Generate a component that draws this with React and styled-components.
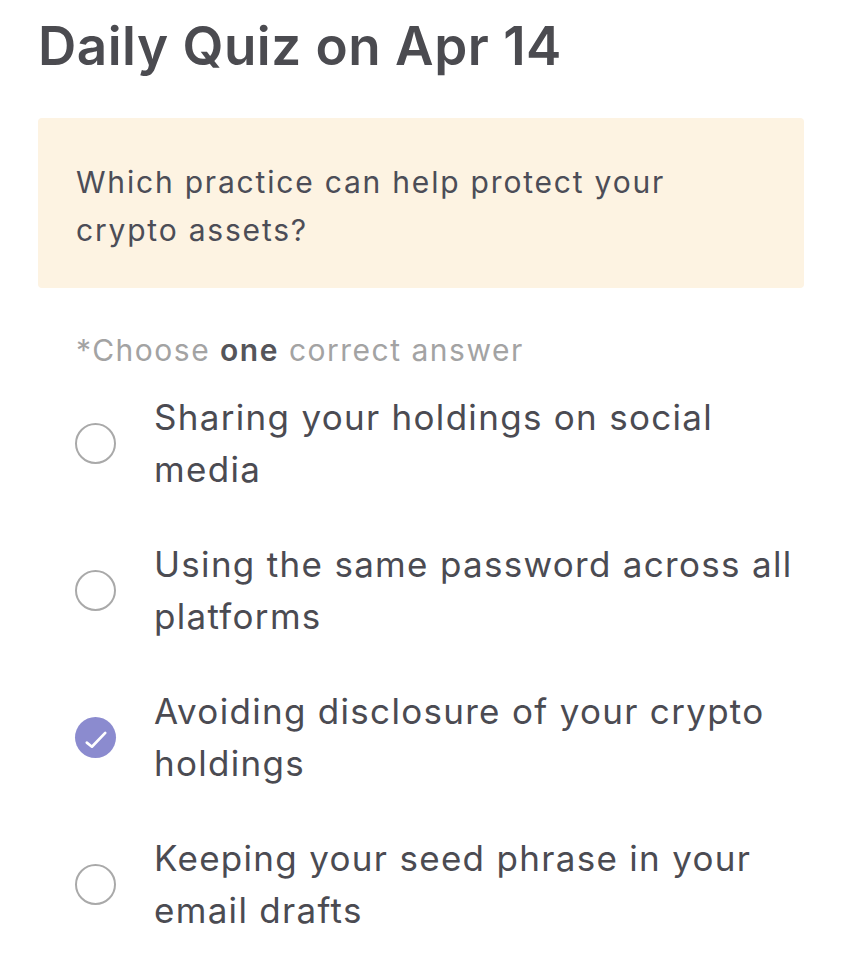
import styled, { createGlobalStyle } from "styled-components";

const GlobalStyle = createGlobalStyle`
  body {
    margin: 0;
    background: #ffffff;
    font-family: Inter, "Open Sans", sans-serif;
  }
`

const options = [
    { text: "Sharing your holdings on social media", checked: false },
    { text: "Using the same password across all platforms", checked: false },
    { text: "Avoiding disclosure of your crypto holdings", checked: true },
    { text: "Keeping your seed phrase in your email drafts", checked: false },
]

export default function App() {
    return (
        <>
            <GlobalStyle />
            <Page>
                <Title>Daily Quiz on Apr 14</Title>
                <QuestionBox>
                    <Question>Which practice can help protect your crypto assets?</Question>
                </QuestionBox>
                <Hint>*Choose <b>one</b> correct answer</Hint>
                <OptionList>
                    {options.map(({ text, checked }, i) => (
                        <Option key={i}>
                            <Radio checked={checked}>
                                {checked && (
                                    <svg width="41" height="41" viewBox="0 0 40 40">
                                        <path d="M11.5 25 L16.5 29 L29.5 15.5" fill="none" stroke="#ffffff" strokeWidth="2.6" strokeLinecap="round" strokeLinejoin="round" />
                                    </svg>
                                )}
                            </Radio>
                            <OptionText>{text}</OptionText>
                        </Option>
                    ))}
                </OptionList>
            </Page>
        </>
    )
}

const Page = styled.div`
    padding: 14px 38px 40px;
    display: flex;
    flex-direction: column;
`
const Title = styled.h1`
    margin: 0;
    font-size: 53px;
    font-weight: 600;
    line-height: 64px;
    color: #4b4b50;
    letter-spacing: 0.5px;
`
const QuestionBox = styled.div`
    margin-top: 40px;
    background: #fdf3e2;
    border-radius: 4px;
    padding: 40px 38px 34px;
`
const Question = styled.p`
    margin: 0;
    max-width: 650px;
    font-size: 30px;
    line-height: 48px;
    font-weight: 400;
    letter-spacing: 1.8px;
    color: #4c4d57;
`
const Hint = styled.p`
    margin: 38px 0 0 38px;
    font-size: 30px;
    line-height: 48px;
    letter-spacing: 1.5px;
    color: #a3a3a3;
    b {
        font-weight: 600;
        color: #55555a;
    }
`
const OptionList = styled.div`
    margin-top: 17px;
    display: flex;
    flex-direction: column;
    gap: 43px;
`
const Option = styled.div`
    display: flex;
    align-items: center;
    gap: 38px;
    padding-left: 37px;
`
const Radio = styled.span`
    flex: none;
    width: 41px;
    height: 41px;
    box-sizing: border-box;
    border-radius: 50%;
    border: ${props => props.checked ? "none" : "2.5px solid #a9a9a9"};
    background: ${props => props.checked ? "#8b8bcf" : "transparent"};
    display: flex;
    align-items: center;
    justify-content: center;
`
const OptionText = styled.span`
    max-width: 650px;
    font-size: 35px;
    line-height: 52px;
    letter-spacing: 1.3px;
    color: #4b4b52;
`
